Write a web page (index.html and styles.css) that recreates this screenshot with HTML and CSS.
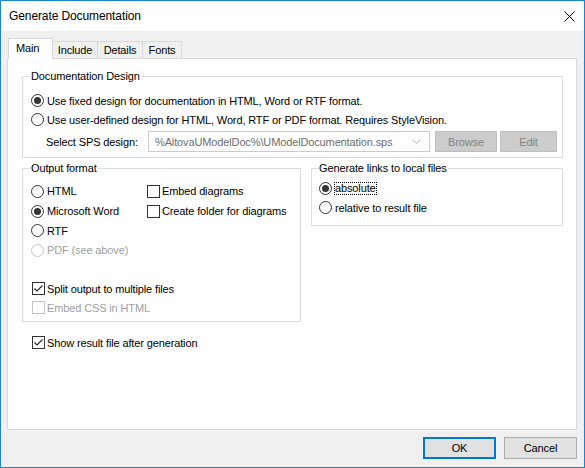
FILE: index.html
```html
<!DOCTYPE html>
<html>
<head>
<meta charset="utf-8">
<link rel="stylesheet" href="styles.css">
</head>
<body>
<div class="window">
  <div class="titlebar">
    <span class="title">Generate Documentation</span>
    <svg class="close" width="11" height="11" viewBox="0 0 11 11"><path d="M0.5 0.5L10.5 10.5M10.5 0.5L0.5 10.5" stroke="#000" stroke-width="1" fill="none"/></svg>
  </div>
  <div class="content">
    <div class="tabs">
      <div class="tab active">Main</div>
      <div class="tab t-include">Include</div>
      <div class="tab t-details">Details</div>
      <div class="tab t-fonts">Fonts</div>
    </div>
    <div class="panel">
      <fieldset class="group design">
        <legend>Documentation Design</legend>
        <div class="opt"><span class="radio on"></span><span>Use fixed design for documentation in HTML, Word or RTF format.</span></div>
        <div class="opt"><span class="radio"></span><span>Use user-defined design for HTML, Word, RTF or PDF format. Requires StyleVision.</span></div>
        <div class="sps-row">
          <span class="sps-label">Select SPS design:</span>
          <div class="combo">
            <span class="combo-text">%AltovaUModelDoc%\UModelDocumentation.sps</span>
            <svg class="chev" width="9" height="5" viewBox="0 0 9 5"><path d="M0.5 0.5L4.5 4.5L8.5 0.5" stroke="#b4b4b4" fill="none"/></svg>
          </div>
          <div class="btn disabled browse">Browse</div>
          <div class="btn disabled edit">Edit</div>
        </div>
      </fieldset>
      <div class="row2">
        <fieldset class="group output">
          <legend>Output format</legend>
          <div class="out-grid">
            <div class="opt"><span class="radio"></span><span>HTML</span></div>
            <div class="opt"><span class="check"></span><span>Embed diagrams</span></div>
            <div class="opt"><span class="radio on"></span><span>Microsoft Word</span></div>
            <div class="opt"><span class="check"></span><span>Create folder for diagrams</span></div>
            <div class="opt"><span class="radio"></span><span>RTF</span></div>
            <div class="opt"></div>
            <div class="opt dis"><span class="radio"></span><span>PDF (see above)</span></div>
            <div class="opt"></div>
          </div>
          <div class="out-bottom">
            <div class="opt"><span class="check on"><svg width="11" height="11" viewBox="0 0 11 11"><path d="M1.5 5.5L4 8L9.5 2.5" stroke="#222" stroke-width="1.1" fill="none"/></svg></span><span>Split output to multiple files</span></div>
            <div class="opt dis"><span class="check"></span><span>Embed CSS in HTML</span></div>
          </div>
        </fieldset>
        <fieldset class="group links">
          <legend>Generate links to local files</legend>
          <div class="opt"><span class="radio on"></span><span class="focus">absolute</span></div>
          <div class="opt"><span class="radio"></span><span>relative to result file</span></div>
        </fieldset>
      </div>
      <div class="opt show"><span class="check on"><svg width="11" height="11" viewBox="0 0 11 11"><path d="M1.5 5.5L4 8L9.5 2.5" stroke="#222" stroke-width="1.1" fill="none"/></svg></span><span>Show result file after generation</span></div>
    </div>
    <div class="buttons">
      <div class="btn dlg default">OK</div>
      <div class="btn dlg">Cancel</div>
    </div>
  </div>
</div>
</body>
</html>
```
FILE: styles.css
```css
* { box-sizing: border-box; }
html, body { margin: 0; padding: 0; }
body {
  width: 585px;
  height: 468px;
  overflow: hidden;
  font-family: "Liberation Sans", Arial, sans-serif;
  font-size: 11px;
  letter-spacing: -0.13px;
  color: #000;
}
.window {
  width: 585px;
  height: 468px;
  border: 1px solid #1883d7;
  background: #f0f0f0;
  display: flex;
  flex-direction: column;
}
.titlebar {
  height: 30px;
  flex: none;
  background: #fff;
  display: flex;
  align-items: center;
  justify-content: space-between;
  padding: 0 9px 0 8px;
}
.title { font-size: 12px; letter-spacing: -0.1px; }
.close { display: block; }

.content {
  flex: 1;
  padding: 7px 7px 0 6px;
  display: flex;
  flex-direction: column;
}
.tabs {
  height: 20px;
  display: flex;
  align-items: flex-end;
  padding-left: 1px;
  position: relative;
  z-index: 1;
}
.tab {
  height: 17px;
  border: 1px solid #d9d9d9;
  border-bottom: none;
  background: #f0f0f0;
  display: flex;
  align-items: center;
  justify-content: center;
  margin-left: -1px;
}
.tab.active {
  margin-left: 0;
  height: 21px;
  margin-bottom: -1px;
  background: #fff;
  width: 45px;
  justify-content: flex-start;
  padding: 0 0 2px 7px;
  position: relative;
  z-index: 2;
}
.t-include { width: 46px; }
.t-details { width: 46px; }
.t-fonts { width: 40px; }

.panel {
  height: 372px;
  border: 1px solid #d9d9d9;
  background: #fff;
  padding: 10px 13px 0 14px;
}

.group {
  margin: 0;
  border: 1px solid #dcdcdc;
  min-width: 0;
  min-inline-size: 0;
}
.group legend {
  padding: 0 1px;
  margin-left: -1px;
  line-height: 14px;
}
.design {
  width: 541px;
  padding: 8px 0 5px 8px;
}
.opt {
  display: flex;
  align-items: center;
  height: 19px;
  white-space: nowrap;
}
.radio {
  width: 13px;
  height: 13px;
  border: 1px solid #333;
  border-radius: 50%;
  flex: none;
  margin-right: 3px;
  display: flex;
  align-items: center;
  justify-content: center;
}
.radio.on::after {
  content: "";
  width: 7px;
  height: 7px;
  border-radius: 50%;
  background: #333;
}
.check {
  width: 13px;
  height: 13px;
  border: 1px solid #333;
  flex: none;
  margin: 0 2px 0 1px;
  display: flex;
  align-items: center;
  justify-content: center;
}
.check svg { display: block; }
.opt.dis { color: #a0a0a0; }
.opt.dis .radio, .opt.dis .check { border-color: #c4c4c4; }

.sps-row {
  display: flex;
  align-items: center;
  margin-top: 2px;
  height: 21px;
  white-space: nowrap;
}
.sps-label {
  width: 117px;
  padding-left: 15px;
  flex: none;
}
.combo {
  width: 282px;
  height: 21px;
  border: 1px solid #cccccc;
  background: #fff;
  display: flex;
  align-items: center;
  justify-content: space-between;
  padding: 0 5px 0 6px;
  color: #6d6d6d;
  flex: none;
}
.chev { display: block; margin-right: 3px; }
.btn {
  display: flex;
  align-items: center;
  justify-content: center;
  flex: none;
}
.btn.disabled {
  height: 21px;
  background: #cccccc;
  border: 1px solid #bfbfbf;
  color: #838383;
}
.browse { width: 62px; margin-left: 5px; }
.edit { width: 57px; margin-left: 3px; }

.row2 {
  display: flex;
  align-items: flex-start;
  gap: 10px;
  margin-top: 3px;
}
.output {
  width: 279px;
  padding: 6px 0 4px 8px;
}
.out-grid {
  display: grid;
  grid-template-columns: 115px auto;
  grid-template-rows: 20px 20px 19px 20px;
}
.out-grid .opt { height: auto; }
.out-bottom { margin-top: 19px; }
.links {
  width: 252px;
  padding: 4px 0 8px 7px;
}
.focus {
  border: 1px dotted #000;
  line-height: 11px;
  margin-left: -1px;
}
.show { margin-top: 11px; margin-left: 9px; }

.buttons {
  display: flex;
  justify-content: flex-end;
  gap: 8px;
  margin-top: 7px;
}
.btn.dlg {
  width: 73px;
  height: 22px;
  background: #e1e1e1;
  border: 1px solid #adadad;
}
.btn.dlg.default {
  border: 2px solid #0078d7;
}
```
